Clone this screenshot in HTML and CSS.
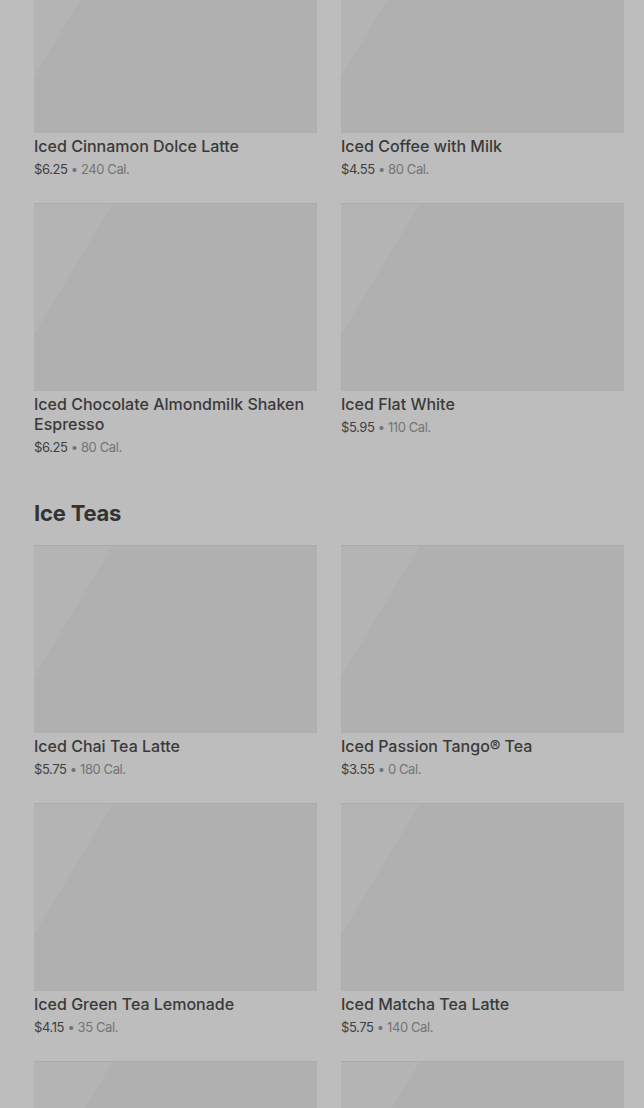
FILE: index.html
```html
<!DOCTYPE html>
<html lang="en">
<head>
  <meta charset="UTF-8" />
  <meta name="viewport" content="width=device-width, initial-scale=1" />
  <title>Menu</title>
  <link rel="stylesheet" href="styles.css">
</head>
<body>

  <div class="menu">

    <!-- cold coffees (scrolled part) -->
    <section class="section section-scrolled">
      <div class="grid">
        <div class="item">
          <div class="thumb"></div>
          <div class="name">Iced Cinnamon Dolce Latte</div>
          <div class="meta"><span class="price">$6.25</span> • 240 Cal.</div>
        </div>
        <div class="item">
          <div class="thumb"></div>
          <div class="name">Iced Coffee with Milk</div>
          <div class="meta"><span class="price">$4.55</span> • 80 Cal.</div>
        </div>
        <div class="item">
          <div class="thumb"></div>
          <div class="name">Iced Chocolate Almondmilk Shaken Espresso</div>
          <div class="meta"><span class="price">$6.25</span> • 80 Cal.</div>
        </div>
        <div class="item">
          <div class="thumb"></div>
          <div class="name">Iced Flat White</div>
          <div class="meta"><span class="price">$5.95</span> • 110 Cal.</div>
        </div>
      </div>
    </section>

    <section class="section">
      <h2>Ice Teas</h2>
      <div class="grid">
        <div class="item">
          <div class="thumb"></div>
          <div class="name">Iced Chai Tea Latte</div>
          <div class="meta"><span class="price">$5.75</span> • 180 Cal.</div>
        </div>
        <div class="item">
          <div class="thumb"></div>
          <div class="name">Iced Passion Tango® Tea</div>
          <div class="meta"><span class="price">$3.55</span> • 0 Cal.</div>
        </div>
        <div class="item">
          <div class="thumb"></div>
          <div class="name">Iced Green Tea Lemonade</div>
          <div class="meta"><span class="price">$4.15</span> • 35 Cal.</div>
        </div>
        <div class="item">
          <div class="thumb"></div>
          <div class="name">Iced Matcha Tea Latte</div>
          <div class="meta"><span class="price">$5.75</span> • 140 Cal.</div>
        </div>
        <div class="item">
          <div class="thumb"></div>
        </div>
        <div class="item">
          <div class="thumb"></div>
        </div>
      </div>
    </section>

  </div>

</body>
</html>
```

FILE: styles.css
```css
html, body { margin: 0; height: 100%; overflow: hidden; }
body {
  background: #bdbdbd;
  font-family: Inter, 'Noto Sans', sans-serif;
  color: #3b3b3b;
}
.menu { padding: 0 20px 0 34px; }
.section-scrolled { margin-top: -55px; }
.section h2 {
  margin: 40px 0 16px; font-size: 22px; line-height: 32px;
  font-weight: 700; color: #333; letter-spacing: -0.2px;
}
.grid {
  display: grid; grid-template-columns: 283px 283px;
  column-gap: 24px; row-gap: 24px;
}
.thumb {
  height: 188px;
  background: linear-gradient(121deg, #b4b4b4 0 20%, #b0b0b0 20%);
  box-shadow: inset 0 1px 0 #aaaaaa;
}
.name {
  margin-top: 3px; font-size: 16px; line-height: 20px;
  font-weight: 500; color: #3a3a3a;
}
.meta {
  margin-top: 3px; font-size: 13px; line-height: 20px;
  color: #747474; letter-spacing: -0.4px;
}
.meta .price { color: #404040; }
```
